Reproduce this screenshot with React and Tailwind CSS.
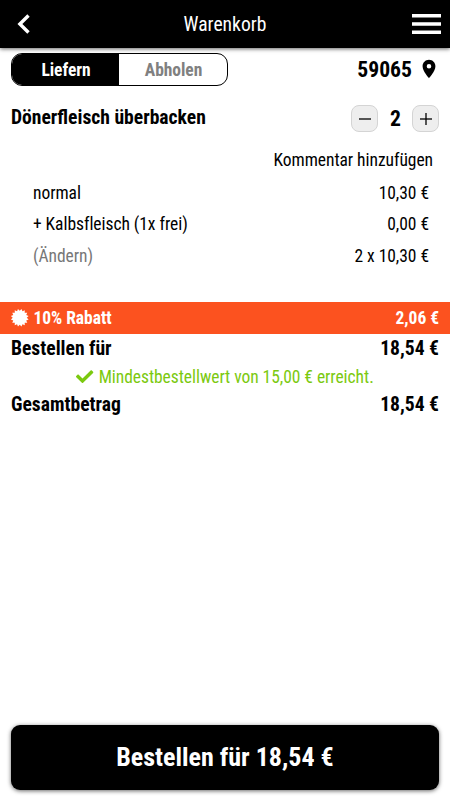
import { FaCheck } from 'react-icons/fa';
import { MdLocationOn } from 'react-icons/md';

const lines = [
  { label: 'normal', price: '10,30 €' },
  { label: '+ Kalbsfleisch (1x frei)', price: '0,00 €' },
  { label: '(Ändern)', price: '2 x 10,30 €', muted: true },
];

// 16 spikes around the discount badge
const badgePoints = Array.from({ length: 32 }, (_, i) => {
  const r = i % 2 ? 7.2 : 9.3;
  const a = ((i + 1) * Math.PI) / 16;
  return `${(9 + r * Math.sin(a)).toFixed(2)},${(9 - r * Math.cos(a)).toFixed(2)}`;
}).join(' ');

function Header() {
  return (
    <header className="flex h-12 items-center justify-between bg-black pr-[9px] pl-[17px] text-white shadow-[0_1px_4px_rgba(0,0,0,0.6)]">
      <svg className="h-5 w-[21px]" viewBox="0 0 21 20" fill="none" stroke="currentColor" strokeWidth="3.4">
        <path d="M11.5 1.500 2.900 10l8.600 8.500" />
      </svg>
      <h1 className="pt-px text-[19.6px]">Warenkorb</h1>
      <svg className="h-5 w-[29px]" viewBox="0 0 29 20" fill="currentColor">
        <path d="M0 0h29v3.500H0zM0 8.300h29v3.400H0zM0 16.500h29V20H0z" />
      </svg>
    </header>
  );
}

function DeliveryBar() {
  return (
    <div className="mt-[5px] flex h-[33px] items-center justify-between pr-[10px] pl-[11px]">
      <div className="flex h-[33px] w-[217px] overflow-hidden rounded-[11px] border border-black text-[17.5px] font-bold tracking-[-0.04px]">
        <button className="w-[107px] bg-black pt-[2px] pl-px text-white">Liefern</button>
        <button className="flex-1 pt-[2px] pl-px text-[#808080]">Abholen</button>
      </div>
      <div className="flex items-center gap-[6px] text-[21.67px] font-bold">
        <span className="pt-px">59065</span>
        <MdLocationOn className="mb-px size-[22px]" />
      </div>
    </div>
  );
}

function StepButton({ plus }) {
  return (
    <button className="flex size-[27px] items-center justify-center rounded-[8px] border border-[#d4d4d4] bg-[#eeeeee]">
      <svg className="size-3" viewBox="0 0 12 12" stroke="black" strokeWidth="1.3">
        <path d="M0 6h12" />
        {plus && <path d="M6 0v12" />}
      </svg>
    </button>
  );
}

function CartItem() {
  return (
    <section>
      <div className="mt-[19px] flex h-[27px] items-center justify-between pr-[11px] pl-[11px]">
        <h2 className="pb-px text-[19.6px] font-bold">Dönerfleisch überbacken</h2>
        <div className="flex items-center">
          <StepButton />
          <span className="w-[34px] pt-px pl-px text-center text-[21.67px] font-bold">2</span>
          <StepButton plus />
        </div>
      </div>
      <div className="mt-[12px] h-[33px] pr-[17px] text-right text-[17.5px] leading-[33px] tracking-[-0.05px]">
        Kommentar hinzufügen
      </div>
      <ul className="pr-[21px] pl-[33px] text-[17.5px] tracking-[-0.05px]">
        {lines.map((line) => (
          <li key={line.label} className="flex h-[31.500px] items-center justify-between">
            <span className={line.muted ? 'text-[#777777]' : ''}>{line.label}</span>
            <span>{line.price}</span>
          </li>
        ))}
      </ul>
    </section>
  );
}

function Summary() {
  return (
    <section className="mt-[30px]">
      <div className="flex h-8 items-center justify-between bg-[#fc521f] px-[11px] text-[17.5px] font-bold tracking-[-0.04px] text-white">
        <span className="flex items-center gap-[5px]">
          <svg className="size-[17.5px]" viewBox="0 0 18 18" fill="currentColor" overflow="visible">
            <polygon points={badgePoints} />
          </svg>
          <span className="pt-px">10% Rabatt</span>
        </span>
        <span className="pt-px">2,06 €</span>
      </div>
      <div className="flex h-[30px] items-center justify-between px-[11px] text-[19.6px] font-bold">
        <span>Bestellen für</span>
        <span>18,54 €</span>
      </div>
      <div className="flex h-[26px] items-center justify-center gap-[5px] text-[17.5px] tracking-[-0.05px] text-[#7bc90f]">
        <FaCheck className="size-[17.33px]" />
        <span className="pt-px">Mindestbestellwert von 15,00 € erreicht.</span>
      </div>
      <div className="flex h-[30px] items-center justify-between px-[11px] text-[19.6px] font-bold">
        <span>Gesamtbetrag</span>
        <span>18,54 €</span>
      </div>
    </section>
  );
}

export default function App() {
  return (
    <main className="flex h-[800px] w-[450px] flex-col overflow-hidden bg-white font-['Roboto_Condensed','Roboto',sans-serif] text-black font-stretch-condensed">
      <Header />
      <DeliveryBar />
      <CartItem />
      <Summary />
      <button className="mx-[11px] mt-auto mb-[10.5px] h-[65px] rounded-[9px] bg-black text-[26px] font-bold text-white shadow-[0_1px_4px_rgba(0,0,0,0.6)]">
        Bestellen für 18,54 €
      </button>
    </main>
  );
}
